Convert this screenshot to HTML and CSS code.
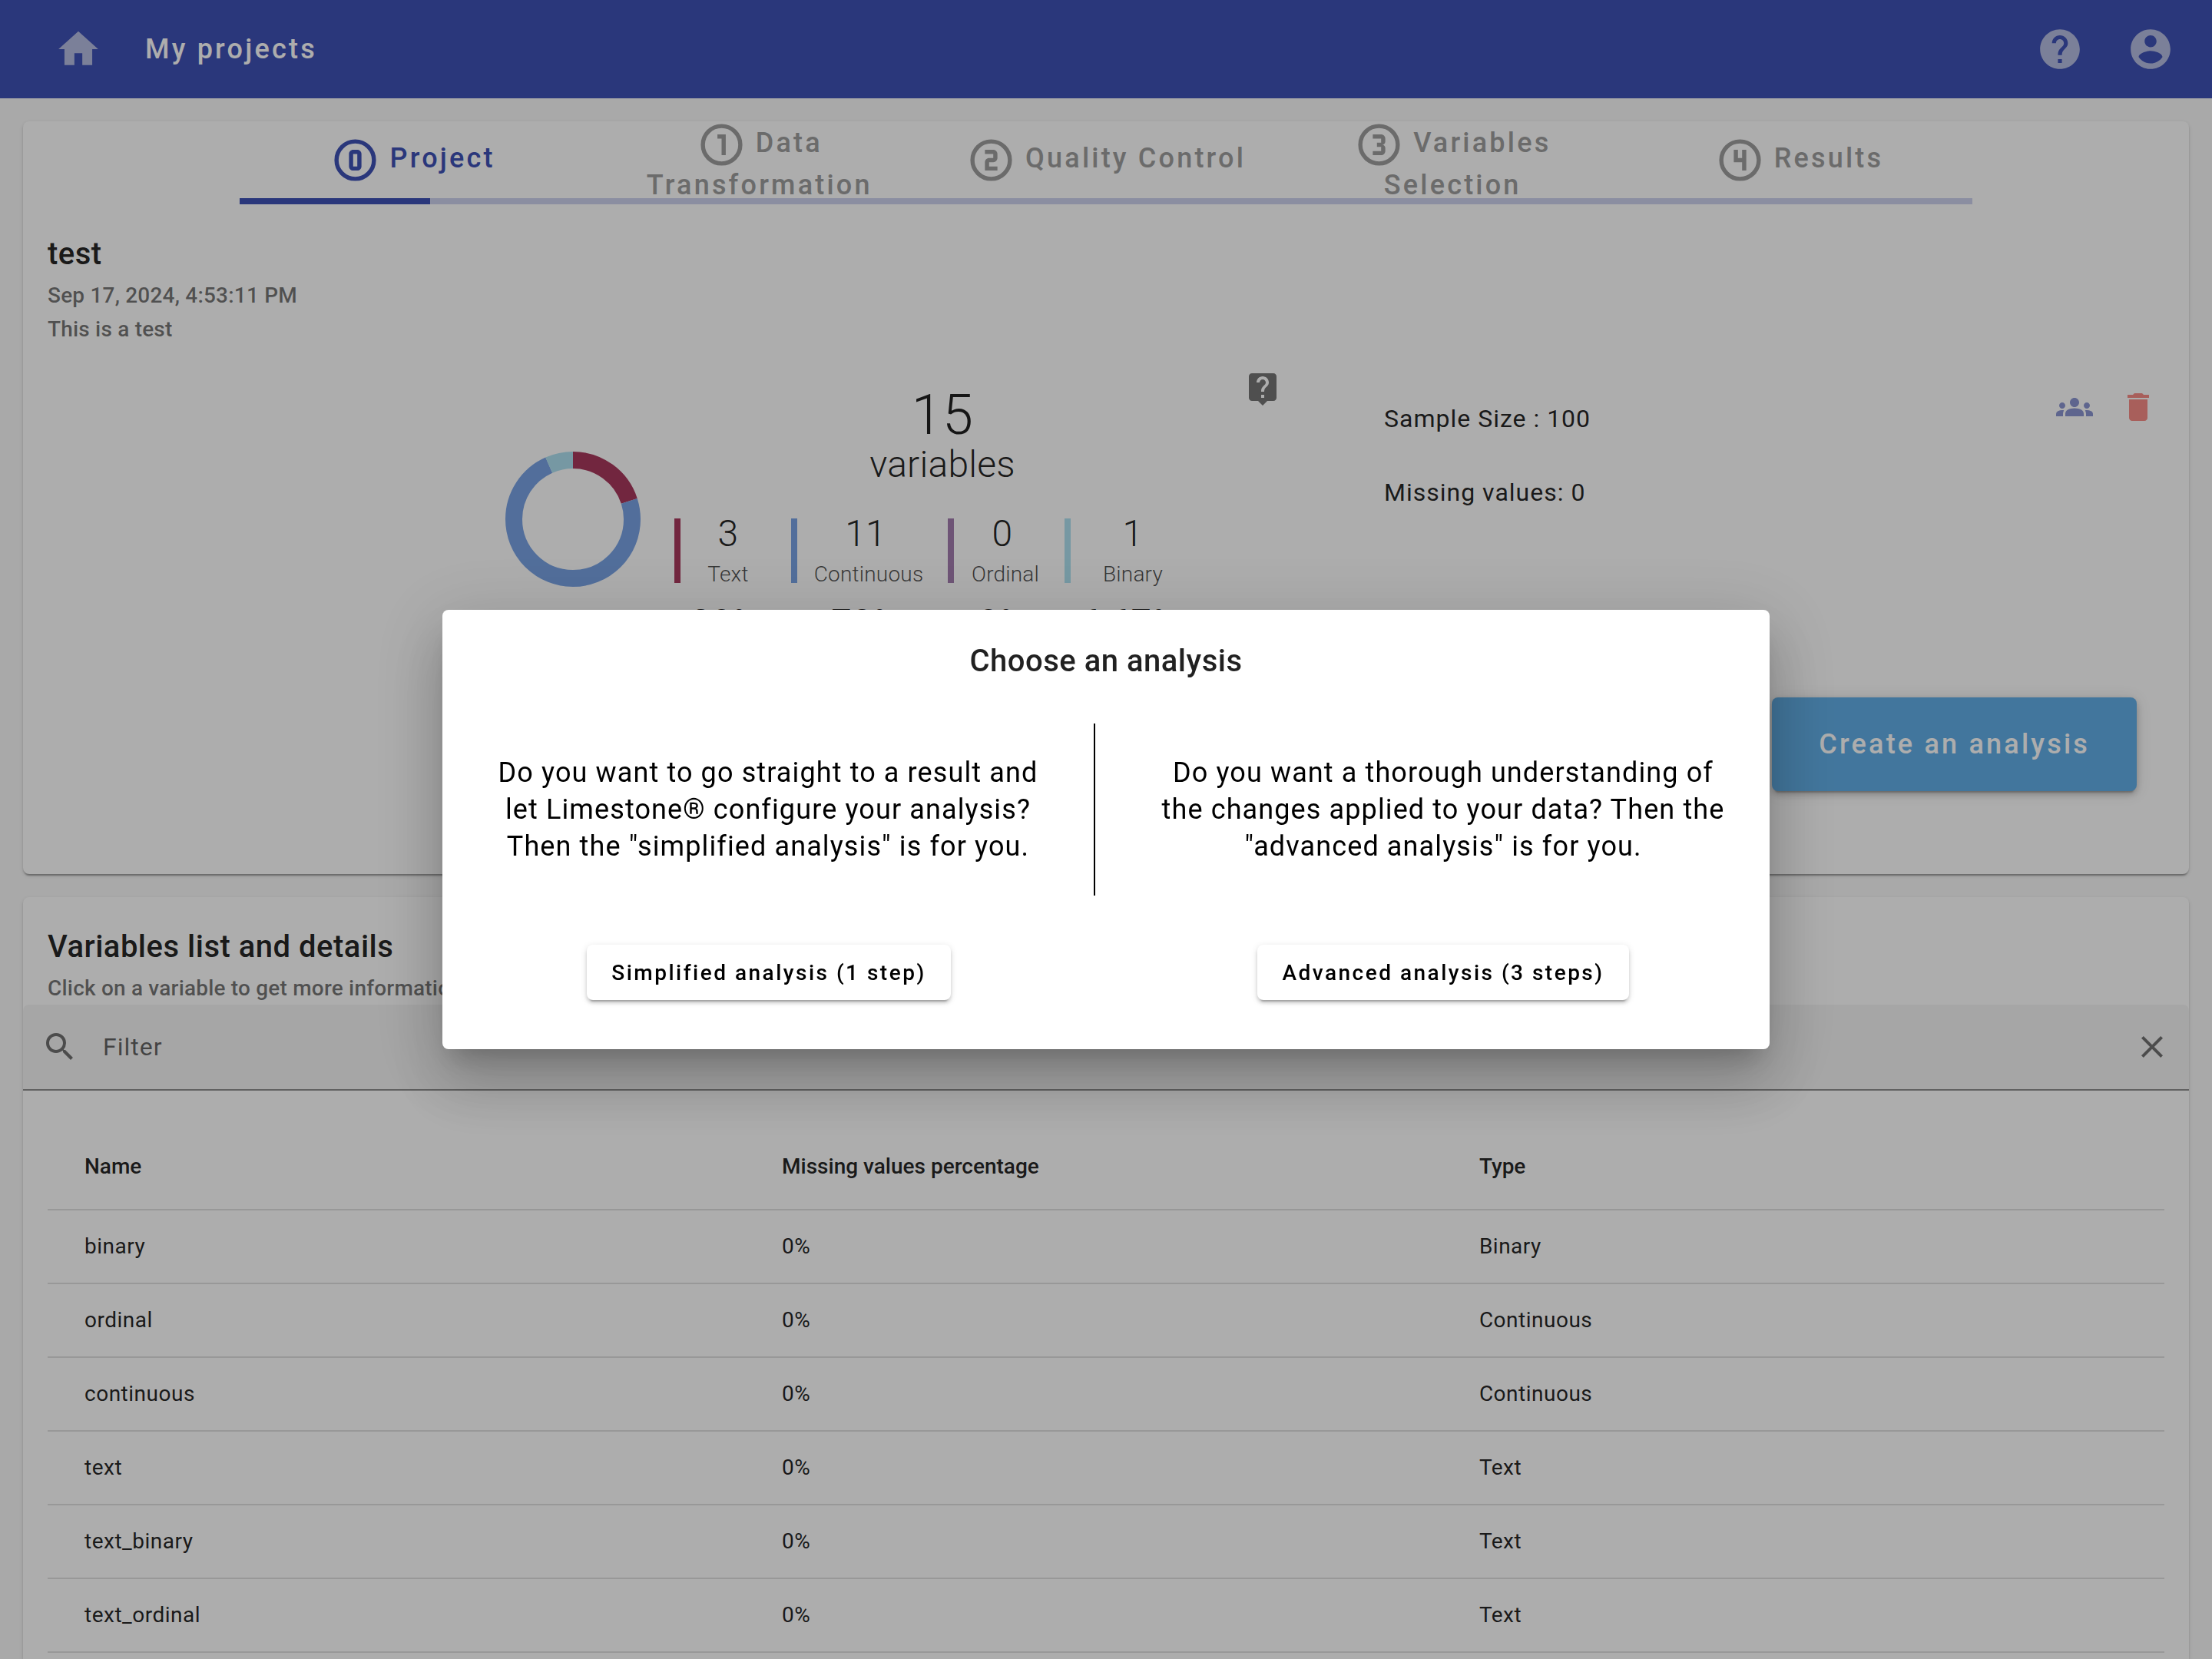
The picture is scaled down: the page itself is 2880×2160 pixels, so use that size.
FILE: index.html
```html
<!DOCTYPE html>
<html lang="en">
<head>
<meta charset="utf-8">
<title>My projects</title>
<link rel="stylesheet" href="styles.css">
</head>
<body>
<div class="page">
  <header class="topbar">
    <a class="icon-link" href="#" aria-label="Home"><svg class="icon-lg" viewBox="0 0 24 24"><path d="M10 20v-6h4v6h5v-8h3L12 3 2 12h3v8z"/></svg></a>
    <a class="topbar-title" href="#">My projects</a>
    <div class="topbar-actions">
      <button class="icon-button" type="button" aria-label="Help"><svg class="icon-lg" viewBox="0 0 24 24"><path d="M12 2C6.48 2 2 6.48 2 12s4.48 10 10 10 10-4.48 10-10S17.52 2 12 2zm1 17h-2v-2h2v2zm2.07-7.75l-.9.92C13.45 12.9 13 13.5 13 15h-2v-.5c0-1.1.45-2.1 1.17-2.83l1.24-1.26c.37-.36.59-.86.59-1.41 0-1.1-.9-2-2-2s-2 .9-2 2H8c0-2.21 1.79-4 4-4s4 1.79 4 4c0 .88-.36 1.68-.93 2.25z"/></svg></button>
      <button class="icon-button" type="button" aria-label="Account"><svg class="icon-lg" viewBox="0 0 24 24"><path d="M12 2C6.48 2 2 6.48 2 12s4.48 10 10 10 10-4.48 10-10S17.52 2 12 2zm0 3c1.66 0 3 1.34 3 3s-1.34 3-3 3-3-1.34-3-3 1.34-3 3-3zm0 14.2c-2.5 0-4.71-1.28-6-3.22.03-1.99 4-3.08 6-3.08 1.99 0 5.97 1.09 6 3.08-1.29 1.94-3.5 3.22-6 3.22z"/></svg></button>
    </div>
  </header>

  <main class="content">
    <section class="card">
      <div class="steps">
        <nav class="step-list">
          <a class="step step-active" href="#"><span><svg class="step-icon" viewBox="0 0 24 24"><circle cx="12" cy="12" r="9"/><path d="M11 7H13C14.1 7 15 7.9 15 9V15C15 16.1 14.1 17 13 17H11C9.9 17 9 16.1 9 15V9C9 7.9 9.9 7 11 7M11 9V15H13V9H11Z"/></svg> Project</span></a>
          <a class="step" href="#"><span><svg class="step-icon" viewBox="0 0 24 24"><circle cx="12" cy="12" r="9"/><path d="M10 7V9H12V17H14V7H10Z"/></svg> Data<br>Transformation</span></a>
          <a class="step" href="#"><span><svg class="step-icon" viewBox="0 0 24 24"><circle cx="12" cy="12" r="9"/><path d="M9 7V9H13V11H11C9.9 11 9 11.9 9 13V17H15V15H11V13H13C14.1 13 15 12.1 15 11V9C15 7.9 14.1 7 13 7H9Z"/></svg> Quality Control</span></a>
          <a class="step" href="#"><span><svg class="step-icon" viewBox="0 0 24 24"><circle cx="12" cy="12" r="9"/><path d="M15 15V13.5C15 12.67 14.33 12 13.5 12C14.33 12 15 11.33 15 10.5V9C15 7.89 14.1 7 13 7H9V9H13V11H11V13H13V15H9V17H13C14.1 17 15 16.1 15 15Z"/></svg> Variables<br>Selection</span></a>
          <a class="step" href="#"><span><svg class="step-icon" viewBox="0 0 24 24"><circle cx="12" cy="12" r="9"/><path d="M9 7V13H13V17H15V7H13V11H11V7H9Z"/></svg> Results</span></a>
        </nav>
        <div class="progress"><div class="progress-value" style="width: 11%"></div></div>
      </div>

      <div class="card-head">
        <h2 class="card-title">test</h2>
        <p class="card-subtitle">Sep 17, 2024, 4:53:11 PM</p>
        <p class="card-subtitle">This is a test</p>
      </div>

      <div class="overview">
        <div class="summary">
          <svg class="donut" viewBox="0 0 176 176" role="img" aria-label="Variables by type">
            <g transform="rotate(-90 88 88)">
              <circle class="arc arc-text" cx="88" cy="88" r="77" pathLength="15" stroke-dasharray="3 12"/>
              <circle class="arc arc-continuous" cx="88" cy="88" r="77" pathLength="15" stroke-dasharray="11 4" stroke-dashoffset="-3"/>
              <circle class="arc arc-binary" cx="88" cy="88" r="77" pathLength="15" stroke-dasharray="1 14" stroke-dashoffset="-14"/>
            </g>
          </svg>
          <div class="stats">
            <p class="stats-total">15</p>
            <p class="stats-caption">variables</p>
            <div class="stat-grid">
              <div class="stat stat-spaced"><div class="stat-main stat-text"><span class="stat-value">3</span><span class="stat-label">Text</span></div><p class="stat-percent">20%</p></div>
              <div class="stat stat-tight"><div class="stat-main stat-continuous"><span class="stat-value">11</span><span class="stat-label">Continuous</span></div><p class="stat-percent">73%</p></div>
              <div class="stat stat-tight"><div class="stat-main stat-ordinal"><span class="stat-value">0</span><span class="stat-label">Ordinal</span></div><p class="stat-percent">0%</p></div>
              <div class="stat stat-spaced"><div class="stat-main stat-binary"><span class="stat-value">1</span><span class="stat-label">Binary</span></div><p class="stat-percent">6.67%</p></div>
            </div>
          </div>
          <svg class="icon hint" viewBox="0 0 24 24"><path d="M19 2H5c-1.11 0-2 .9-2 2v14c0 1.1.89 2 2 2h4l3 3 3-3h4c1.1 0 2-.9 2-2V4c0-1.1-.9-2-2-2zm-6 16h-2v-2h2v2zm2.07-7.75l-.9.92C13.45 11.9 13 12.5 13 14h-2v-.5c0-1.1.45-2.1 1.17-2.83l1.24-1.26c.37-.36.59-.86.59-1.41 0-1.1-.9-2-2-2s-2 .9-2 2H8c0-2.21 1.79-4 4-4s4 1.79 4 4c0 .88-.36 1.68-.93 2.25z"/></svg>
        </div>
        <div class="side">
          <div class="side-top">
            <div class="facts">
              <p>Sample Size : 100</p>
              <p>Missing values: 0</p>
            </div>
            <div class="side-actions">
              <button class="icon-button share" type="button" aria-label="Share"><svg class="icon" viewBox="0 0 24 24"><path d="M12 12.75c1.63 0 3.07.39 4.24.9 1.08.48 1.76 1.56 1.76 2.73V18H6v-1.61c0-1.18.68-2.26 1.76-2.73 1.17-.52 2.61-.91 4.24-.91zM4 13c1.1 0 2-.9 2-2s-.9-2-2-2-2 .9-2 2 .9 2 2 2zm1.13 1.1c-.37-.06-.74-.1-1.13-.1-.99 0-1.93.21-2.78.58A2.01 2.01 0 0 0 0 16.43V18h4.5v-1.61c0-.83.23-1.61.63-2.29zM20 13c1.1 0 2-.9 2-2s-.9-2-2-2-2 .9-2 2 .9 2 2 2zm4 3.43c0-.81-.48-1.53-1.22-1.85A6.95 6.95 0 0 0 20 14c-.39 0-.76.04-1.13.1.4.68.63 1.46.63 2.29V18H24v-1.57zM12 6c1.66 0 3 1.34 3 3s-1.34 3-3 3-3-1.34-3-3 1.34-3 3-3z"/></svg></button>
              <button class="icon-button delete" type="button" aria-label="Delete"><svg class="icon" viewBox="0 0 24 24"><path d="M6 19c0 1.1.9 2 2 2h8c1.1 0 2-.9 2-2V7H6v12zM19 4h-3.5l-1-1h-5l-1 1H5v2h14V4z"/></svg></button>
            </div>
          </div>
          <button class="create" type="button">Create an analysis</button>
        </div>
      </div>
    </section>

    <section class="card card-open">
      <div class="card-head">
        <h2 class="card-title">Variables list and details</h2>
        <p class="card-subtitle">Click on a variable to get more information</p>
      </div>
      <div class="filter">
        <svg class="icon" viewBox="0 0 24 24"><path d="M15.5 14h-.79l-.28-.27A6.471 6.471 0 0 0 16 9.5 6.5 6.5 0 1 0 9.5 16c1.61 0 3.09-.59 4.23-1.57l.27.28v.79l5 4.99L20.49 19l-4.99-5zm-6 0C7.01 14 5 11.99 5 9.5S7.01 5 9.5 5 14 7.01 14 9.5 11.99 14 9.5 14z"/></svg>
        <input class="filter-input" type="text" placeholder="Filter" aria-label="Filter">
        <button class="icon-button" type="button" aria-label="Clear"><svg class="icon" viewBox="0 0 24 24"><path d="M19 6.41L17.59 5 12 10.59 6.41 5 5 6.41 10.59 12 5 17.59 6.41 19 12 13.41 17.59 19 19 17.59 13.41 12z"/></svg></button>
      </div>
      <div class="table-wrap">
        <table class="variables">
          <colgroup><col class="col-edge"><col class="col-middle"><col class="col-edge"></colgroup>
          <thead><tr><th>Name</th><th>Missing values percentage</th><th>Type</th></tr></thead>
          <tbody>
            <tr><td>binary</td><td>0%</td><td>Binary</td></tr>
            <tr><td>ordinal</td><td>0%</td><td>Continuous</td></tr>
            <tr><td>continuous</td><td>0%</td><td>Continuous</td></tr>
            <tr><td>text</td><td>0%</td><td>Text</td></tr>
            <tr><td>text_binary</td><td>0%</td><td>Text</td></tr>
            <tr><td>text_ordinal</td><td>0%</td><td>Text</td></tr>
          </tbody>
        </table>
      </div>
    </section>
  </main>
</div>

<div class="backdrop">
  <div class="dialog" role="dialog" aria-modal="true" aria-labelledby="dialog-title">
    <h1 class="dialog-title" id="dialog-title">Choose an analysis</h1>
    <div class="choices">
      <p class="choice-text choice-divided">Do you want to go straight to a result and let Limestone® configure your analysis? Then the "simplified analysis" is for you.</p>
      <p class="choice-text">Do you want a thorough understanding of the changes applied to your data? Then the "advanced analysis" is for you.</p>
      <div class="choice-action"><button class="choice-button" type="button">Simplified analysis (1 step)</button></div>
      <div class="choice-action"><button class="choice-button" type="button">Advanced analysis (3 steps)</button></div>
    </div>
  </div>
</div>
</body>
</html>
```
FILE: styles.css
```css
* {
  box-sizing: border-box;
}

body {
  margin: 0;
  background: #fafafa;
  color: rgba(0, 0, 0, 0.87);
  font-family: Roboto, "Liberation Sans", sans-serif;
  font-size: 28px;
  overflow: hidden;
}

h1, h2, p {
  margin: 0;
}

a {
  color: inherit;
  text-decoration: none;
}

button {
  border: 0;
  padding: 0;
  background: none;
  color: inherit;
  font: inherit;
}

svg {
  fill: currentColor;
}

.page {
  display: flex;
  flex-direction: column;
  min-height: 100vh;
}

.icon {
  display: block;
  flex: none;
  width: 48px;
  height: 48px;
}

.icon-lg {
  display: block;
  width: 62px;
  height: 62px;
  opacity: 0.62;
}

/* Top bar */

.topbar {
  display: flex;
  align-items: center;
  height: 128px;
  padding: 0 49px 0 71px;
  background: #3f51b5;
  color: #fff;
}

.topbar-title {
  margin-left: 56px;
  font-size: 36px;
  font-weight: 500;
  letter-spacing: 0.089em;
}

.topbar-actions {
  display: flex;
  gap: 56px;
  margin-left: auto;
}

/* Cards */

.content {
  display: flex;
  flex: 1;
  flex-direction: column;
  gap: 30px;
  padding: 30px 30px 0;
}

.card {
  border-radius: 8px;
  background: #fff;
  box-shadow: 0 4px 2px -2px rgba(0, 0, 0, 0.2), 0 2px 2px rgba(0, 0, 0, 0.14), 0 2px 6px rgba(0, 0, 0, 0.12);
}

.card-open {
  flex: 1;
  border-radius: 8px 8px 0 0;
}

.card-head {
  padding: 33px 32px 0;
}

.card-title {
  font-size: 40px;
  font-weight: 500;
  letter-spacing: 0.0125em;
  line-height: 64px;
}

.card-subtitle {
  color: rgba(0, 0, 0, 0.54);
  font-weight: 500;
  letter-spacing: 0.007em;
  line-height: 44px;
}

/* Steps */

.steps {
  width: 80%;
  margin: 0 auto;
}

.step-list {
  display: grid;
  grid-template-columns: repeat(5, 1fr);
  grid-template-rows: 100px;
  align-items: center;
}

.step {
  color: #9e9e9e;
  font-size: 36px;
  font-weight: 500;
  letter-spacing: 0.089em;
  line-height: 40px;
  text-align: center;
}

.step-active {
  color: #3f51b5;
}

.step-icon {
  width: 65px;
  height: 65px;
  vertical-align: middle;
}

.step-icon circle {
  fill: none;
  stroke: currentColor;
  stroke-width: 2;
}

.progress {
  height: 8px;
  background: #cdd1ee;
}

.progress-value {
  height: 100%;
  background: #3f51b5;
}

/* Project overview */

.overview {
  display: grid;
  grid-template-columns: 1772fr 1048fr;
  padding: 31px 0 108px;
}

.summary {
  display: flex;
  align-items: flex-start;
  justify-content: flex-end;
  gap: 44px;
  padding-right: 134px;
}

.donut {
  width: 176px;
  height: 176px;
  margin-top: 106px;
}

.arc {
  fill: none;
  stroke-width: 22;
}

.arc-text {
  stroke: #a9395d;
}

.arc-continuous {
  stroke: #79a3e5;
}

.arc-binary {
  stroke: #aee1f1;
}

.stats {
  padding-top: 23px;
  font-weight: 300;
  letter-spacing: 0.007em;
  text-align: center;
}

.stats-total {
  font-size: 72px;
  line-height: 72px;
}

.stats-caption {
  font-size: 48px;
  line-height: 56px;
}

.stat-grid {
  display: grid;
  grid-template-columns: 152px 204px 152px 190px;
  margin-top: 42px;
}

.stat {
  padding-right: 10px;
}

.stat-spaced {
  padding-right: 20px;
}

.stat-main {
  display: flex;
  flex-direction: column;
  justify-content: space-between;
  height: 84px;
  border-left: 8px solid;
}

.stat-text {
  border-color: #a9395d;
}

.stat-continuous {
  border-color: #79a3e5;
}

.stat-ordinal {
  border-color: #a37daf;
}

.stat-binary {
  border-color: #aee1f1;
}

.stat-value {
  color: rgba(0, 0, 0, 0.87);
  font-size: 48px;
  line-height: 40px;
}

.stat-tight .stat-value {
  padding-right: 8px;
}

.stat-label {
  color: rgba(0, 0, 0, 0.7);
  line-height: 22px;
}

.stat-percent {
  margin-top: 32px;
  font-size: 48px;
  line-height: 40px;
}

.hint {
  color: rgba(0, 0, 0, 0.54);
}

.side {
  display: flex;
  flex-direction: column;
  justify-content: space-between;
  align-items: flex-end;
  min-height: 548px;
  padding-top: 24px;
}

.side-top {
  display: flex;
  align-items: flex-start;
  justify-content: space-between;
  width: 100%;
  padding-right: 42px;
}

.facts {
  display: grid;
  gap: 48px;
  padding-top: 15px;
  font-size: 32px;
  letter-spacing: 1px;
  line-height: 48px;
}

.side-actions {
  display: flex;
  gap: 35px;
  opacity: 0.6;
}

.share {
  color: #3f51b5;
}

.delete {
  color: #f44336;
}

.create {
  height: 122px;
  margin-right: 68px;
  padding: 0 61px;
  border-radius: 8px;
  background: #62afe7;
  box-shadow: 0 6px 2px -4px rgba(0, 0, 0, 0.2), 0 4px 8px rgba(0, 0, 0, 0.2), 0 2px 20px rgba(0, 0, 0, 0.12);
  color: #fff;
  font-size: 36px;
  font-weight: 500;
  letter-spacing: 0.089em;
}

/* Filter and table */

.filter {
  display: flex;
  align-items: center;
  height: 112px;
  margin-top: -1px;
  padding: 0 24px;
  border-bottom: 2px solid rgba(0, 0, 0, 0.42);
  border-radius: 8px 8px 0 0;
  background: rgba(0, 0, 0, 0.04);
  color: rgba(0, 0, 0, 0.54);
}

.filter-input {
  flex: 1;
  margin: 0 32px;
  padding: 0;
  border: 0;
  outline: 0;
  background: none;
  font: inherit;
  font-size: 32px;
  letter-spacing: 1px;
}

.filter-input::placeholder {
  color: rgba(0, 0, 0, 0.6);
}

.table-wrap {
  padding: 44px 32px 0;
}

.variables {
  width: 100%;
  border-collapse: separate;
  border-spacing: 0;
  table-layout: fixed;
  text-align: left;
}

.col-edge {
  width: 33.53%;
}

.col-middle {
  width: 32.94%;
}

.variables th,
.variables td {
  height: 96px;
  padding: 0 32px 2px;
  border-bottom: 2px solid rgba(0, 0, 0, 0.12);
}

.variables th {
  height: 112px;
  font-weight: 500;
}

.variables td {
  letter-spacing: 0.018em;
}

.variables th:first-child,
.variables td:first-child {
  padding-left: 48px;
}

/* Dialog */

.backdrop {
  position: fixed;
  inset: 0;
  display: grid;
  place-items: center;
  background: rgba(0, 0, 0, 0.32);
}

.dialog {
  width: 60vw;
  padding: 35px 0 64px;
  border-radius: 8px;
  background: #fff;
  box-shadow: 0 22px 30px -14px rgba(0, 0, 0, 0.2), 0 48px 76px 6px rgba(0, 0, 0, 0.14), 0 18px 92px 16px rgba(0, 0, 0, 0.12);
}

.dialog-title {
  margin-bottom: 49px;
  font-size: 40px;
  font-weight: 500;
  letter-spacing: 0.0125em;
  line-height: 64px;
  text-align: center;
}

.choices {
  display: grid;
  grid-template-columns: 1fr 1fr;
  gap: 64px 28px;
}

.choice-text {
  padding: 40px 48px;
  color: #000;
  font-size: 36px;
  letter-spacing: 0.031em;
  line-height: 48px;
  text-align: center;
}

.choice-divided {
  border-right: 2px solid #000;
}

.choice-action {
  display: flex;
  justify-content: center;
}

.choice-button {
  height: 72px;
  padding: 0 32px;
  border-radius: 8px;
  background: #fff;
  box-shadow: 0 6px 2px -4px rgba(0, 0, 0, 0.2), 0 4px 4px rgba(0, 0, 0, 0.14), 0 2px 10px rgba(0, 0, 0, 0.12);
  color: #000;
  font-weight: 500;
  letter-spacing: 0.089em;
}
```
